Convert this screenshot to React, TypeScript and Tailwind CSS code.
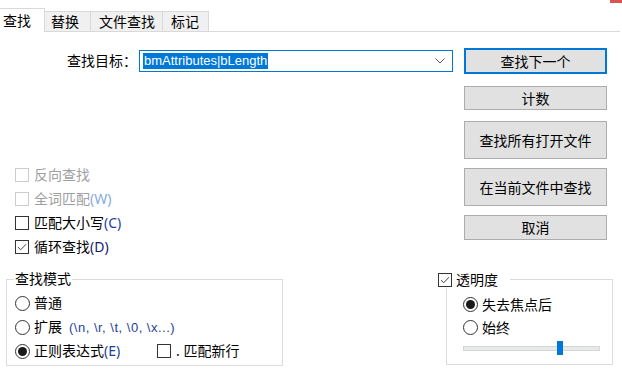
import React from 'react';

const Check = ({ checked = false, disabled = false }: { checked?: boolean; disabled?: boolean }) => (
  <span
    className={`w-[14px] h-[14px] shrink-0 border bg-white flex items-center justify-center ${
      disabled ? 'border-[#cccccc]' : 'border-[#333333]'
    }`}
  >
    {checked && (
      <svg width="12" height="12" viewBox="0 0 12 12">
        <path d="M2 6.2 L4.7 8.8 L10 3.2" fill="none" stroke="#444444" strokeWidth="1" />
      </svg>
    )}
  </span>
);

const Radio = ({ on = false }: { on?: boolean }) => (
  <span className="w-[15px] h-[15px] shrink-0 rounded-full border border-[#333333] bg-white flex items-center justify-center">
    {on && <span className="w-[9px] h-[9px] rounded-full bg-[#1a1a1a]" />}
  </span>
);

const Btn = ({ children, className = '' }: { children: React.ReactNode; className?: string }) => (
  <div className={`flex items-center justify-center bg-[#e1e1e1] ${className}`}>{children}</div>
);

export default function App() {
  return (
    <div className="relative w-[622px] h-[370px] overflow-hidden bg-white text-[14px] text-black font-['Noto_Sans','Noto_Sans_CJK_SC',sans-serif]">
      <div className="absolute top-0 right-0 w-[12px] h-[3px] bg-[#d9534f]" />

      {/* tabs */}
      <div className="flex items-end h-[32px] mr-[2px] border-b border-[#d9d9d9]">
        <div className="w-[45px] h-[24px] -mb-px pl-[3px] bg-white border-t border-r border-[#d9d9d9] flex items-center leading-none">
          查找
        </div>
        <div className="w-[46px] h-[20px] pl-[6px] bg-[#f0f0f0] border-t border-r border-[#d9d9d9] flex items-center leading-none">
          替换
        </div>
        <div className="w-[72px] h-[20px] pl-[8px] bg-[#f0f0f0] border-t border-r border-[#d9d9d9] flex items-center leading-none">
          文件查找
        </div>
        <div className="w-[46px] h-[20px] pl-[8px] bg-[#f0f0f0] border-t border-r border-[#d9d9d9] flex items-center leading-none">
          标记
        </div>
      </div>

      {/* top section */}
      <div className="flex h-[230px]">
        <div className="w-[464px]">
          <div className="mt-[18px] h-[22px] flex items-center">
            <span className="w-[137px] text-right leading-none">查找目标：</span>
            <div className="ml-[2px] w-[314px] h-[22px] border border-[#0078d7] flex items-center pl-[3px] pr-[7px]">
              <span className="h-[16px] px-[1px] bg-[#0078d7] text-white text-[13px] leading-[16px] font-['Liberation_Sans',sans-serif]">
                bmAttributes|bLength
              </span>
              <svg className="ml-auto" width="10" height="6" viewBox="0 0 10 6">
                <path d="M0.5 0.5 L5 5 L9.5 0.5" fill="none" stroke="#555555" strokeWidth="1" />
              </svg>
            </div>
          </div>

          <div className="mt-[91px] pl-[15px]">
            <div className="h-[24px] flex items-center gap-[5px] text-[#a0a0a0]">
              <Check disabled />
              <span className="leading-none">反向查找</span>
            </div>
            <div className="h-[24px] flex items-center gap-[5px] text-[#a0a0a0]">
              <Check disabled />
              <span className="leading-none">
                全词匹配<span className="text-[#86acdc]">(W)</span>
              </span>
            </div>
            <div className="h-[24px] flex items-center gap-[5px]">
              <Check />
              <span className="leading-none">
                匹配大小写<span className="text-[#1f3f99]">(C)</span>
              </span>
            </div>
            <div className="h-[24px] flex items-center gap-[5px]">
              <Check checked />
              <span className="leading-none">
                循环查找<span className="text-[#14206e]">(D)</span>
              </span>
            </div>
          </div>
        </div>

        <div className="w-[143px] pt-[16px] flex flex-col">
          <Btn className="h-[26px] border-2 border-[#0078d7]">查找下一个</Btn>
          <Btn className="mt-[12px] h-[24px] border border-[#adadad]">计数</Btn>
          <Btn className="mt-[11px] h-[38px] border border-[#adadad]">查找所有打开文件</Btn>
          <Btn className="mt-[9px] h-[38px] border border-[#adadad]">在当前文件中查找</Btn>
          <Btn className="mt-[9px] h-[25px] border border-[#adadad]">取消</Btn>
        </div>
      </div>

      {/* bottom section */}
      <div className="flex items-start">
        <fieldset className="ml-[6px] mt-[9px] w-[277px] h-[95px] border border-[#dcdcdc] pl-[8px]">
          <legend className="ml-[-1px] px-[1px] h-[16px] leading-[16px]">查找模式</legend>
          <div className="mt-[4px] h-[24px] flex items-center gap-[4px]">
            <Radio />
            <span className="leading-none">普通</span>
          </div>
          <div className="h-[24px] flex items-center gap-[4px]">
            <Radio />
            <span className="leading-none">扩展</span>
            <span className="ml-[3px] text-[13px] tracking-[0.5px] leading-none text-[#1f3f99] font-['Liberation_Sans',sans-serif]">
              (\n, \r, \t, \0, \x...)
            </span>
          </div>
          <div className="h-[24px] flex items-center gap-[4px]">
            <Radio on />
            <span className="w-[119px] leading-none">
              正则表达式<span className="text-[#1f3f99]">(E)</span>
            </span>
            <Check />
            <span className="ml-[1px] leading-none">. 匹配新行</span>
          </div>
        </fieldset>

        <div className="relative ml-[163px] mt-[17px] w-[167px] h-[86px] border border-[#dcdcdc] pl-[16px] pt-[13px]">
          <div className="absolute left-[-9px] top-[-8px] w-[72px] h-[16px] bg-white flex items-center gap-[4px]">
            <Check checked />
            <span className="leading-none">透明度</span>
          </div>
          <div className="h-[23px] flex items-center gap-[4px]">
            <Radio on />
            <span className="leading-none">失去焦点后</span>
          </div>
          <div className="h-[23px] flex items-center gap-[4px]">
            <Radio />
            <span className="leading-none">始终</span>
          </div>
          <div className="mt-[2px] h-[14px] w-[137px] relative flex items-center">
            <div className="w-full h-[5px] bg-[#e7eaea] border border-[#d6d6d6]" />
            <div className="absolute left-[94px] top-0 w-[6px] h-[14px] bg-[#0078d7]" />
          </div>
        </div>
      </div>
    </div>
  );
}
